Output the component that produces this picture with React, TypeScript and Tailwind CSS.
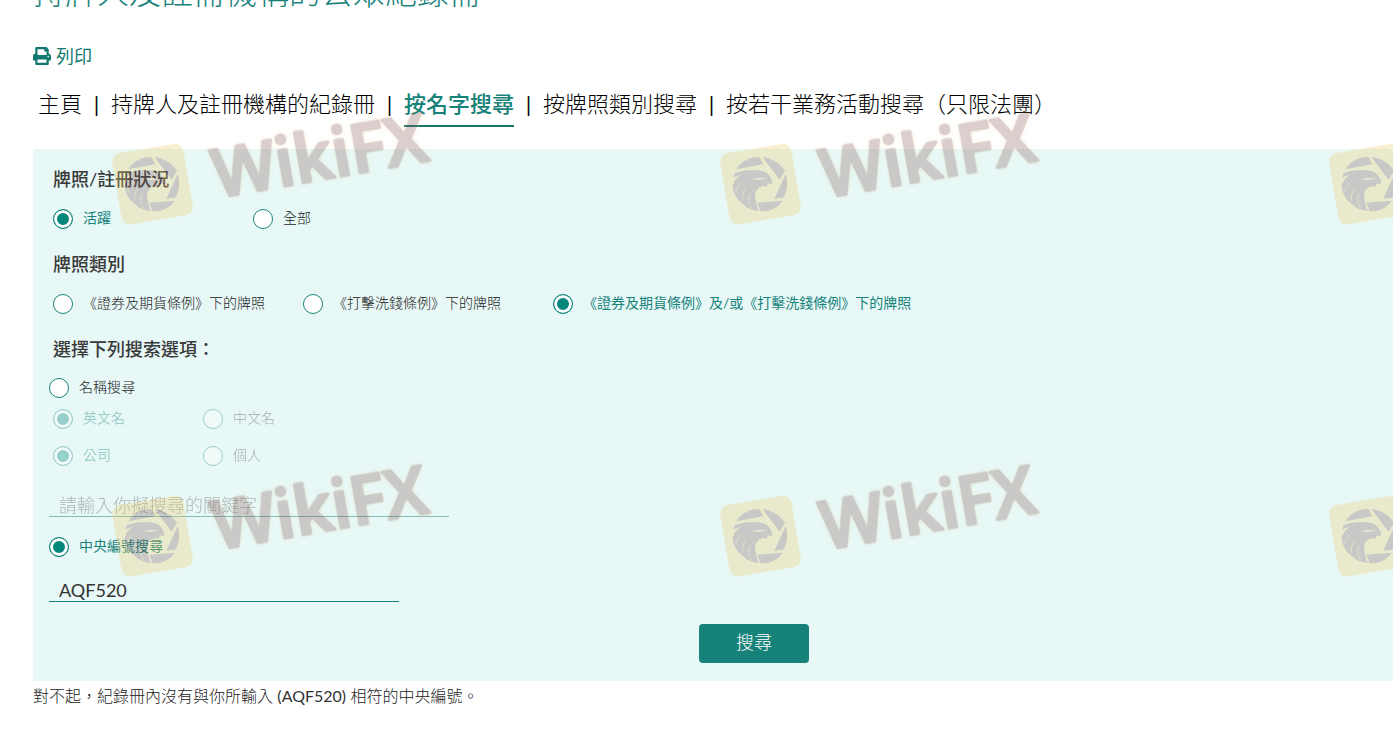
import { useState } from "react";
import type { ReactNode } from "react";
import { FaPrint } from "react-icons/fa";

const NAV = [
  { label: "主頁" },
  { label: "持牌人及註冊機構的紀錄冊" },
  { label: "按名字搜尋", active: true },
  { label: "按牌照類別搜尋" },
  { label: "按若干業務活動搜尋（只限法團）" },
];

// the last column only has room for the badge
const MARKS = [0, 352].flatMap((y) => [
  { x: 0, y, word: true },
  { x: 608, y, word: true },
  { x: 1217, y, word: false },
]);

type RadioProps = {
  name: string;
  value: string;
  label: string;
  checked: boolean;
  onChange: (value: string) => void;
  disabled?: boolean;
  className?: string;
};

function Radio({ name, value, label, checked, onChange, disabled, className = "" }: RadioProps) {
  return (
    <label className={`flex h-5 items-center gap-2.5 text-sm whitespace-nowrap ${className}`}>
      <input
        type="radio"
        name={name}
        value={value}
        checked={checked}
        disabled={disabled}
        onChange={() => onChange(value)}
        className="peer size-5 shrink-0 appearance-none rounded-full border border-[#17827a] bg-white checked:bg-[#05877b] checked:shadow-[inset_0_0_0_3px_white] disabled:opacity-35"
      />
      <span className="pb-0.5 leading-5 font-light text-[#222] peer-checked:font-normal peer-checked:text-[#17827a] peer-disabled:opacity-35">
        {label}
      </span>
    </label>
  );
}

function GroupTitle({ children }: { children: ReactNode }) {
  return <h2 className="pl-1 text-lg leading-7 font-medium text-[#3a3a3a]">{children}</h2>;
}

function Watermark() {
  return (
    <svg aria-hidden="true" className="pointer-events-none absolute inset-0 h-full w-full">
      {MARKS.map(({ x, y, word }) => (
        <g key={`${x}-${y}`} transform={`translate(${x} ${y})`} opacity="0.3">
          <g transform="translate(107 138) scale(0.3333)">
            <rect x="28" y="30" width="217" height="217" rx="26" fill="#edcd68" transform="rotate(-9.6 136.5 138.5)" />
            <g fill="#825f5c">
              <path d="M64 94C78 71 101 57 133 57L145 79Z" />
              <path d="M142 57C171 61 195 75 210 98L194 125Z" />
              <path d="M212 107C220 132 217 158 205 179L178 182Z" />
              <path d="M127 194L203 188C188 210 164 221 137 220Z" />
              <path d="M60 105C84 96 117 93 142 99C161 104 171 119 172 139C164 134 153 137 157 146C145 143 133 145 126 155C116 168 120 184 131 219C105 216 95 209 83 198C66 185 54 165 53 143C57 129 65 119 76 112C67 112 60 116 55 121C56 114 58 109 60 105Z" />
            </g>
            <path d="M112 120C124 127 139 129 157 118C144 122 130 121 112 120Z" fill="#edcd68" />
            <path d="M78 134C69 142 64 151 63 162M91 151C84 162 81 174 83 188M105 168C99 180 101 196 109 211" fill="none" stroke="#edcd68" strokeWidth="2" />
          </g>
          {word && (
            <text
              transform="translate(217 198) rotate(-10)"
              fontFamily="'Open Sans', 'Noto Sans', sans-serif"
              fontSize="67"
              fontWeight="600"
              fill="#8a5f5c"
              stroke="#8a5f5c"
              strokeWidth="3"
              strokeLinejoin="round"
              className="drop-shadow-[0_0_2px_#f3d890]"
            >
              WikiFX
            </text>
          )}
        </g>
      ))}
    </svg>
  );
}

export default function App() {
  const [status, setStatus] = useState("active");
  const [licence, setLicence] = useState("both");
  const [mode, setMode] = useState("ce");
  const [lang, setLang] = useState("en");
  const [entity, setEntity] = useState("company");
  const [keyword, setKeyword] = useState("");
  const [ceNumber, setCeNumber] = useState("AQF520");
  const byName = mode === "name";

  return (
    <div className="relative min-h-screen overflow-hidden bg-white pl-[33px] font-[Lato,'Noto_Sans_CJK_TC',sans-serif] text-[#222]">
      <h1 className="-mt-7 text-[32px] leading-10 font-light text-[#17827a]">
        持牌人及註冊機構的公眾紀錄冊
      </h1>

      <button type="button" className="mt-8 flex h-6 items-center gap-[5px] text-lg leading-6 text-[#117a70]">
        <FaPrint className="size-[18px]" />
        列印
      </button>

      <nav className="mt-[15px] flex h-11 items-start pl-[5px] text-[22px] leading-[42px] font-light whitespace-nowrap text-black">
        {NAV.map((item, i) => (
          <span key={item.label} className="flex">
            {i > 0 && <span className="w-[29px] text-center font-normal">|</span>}
            <a
              href="#"
              className={item.active ? "border-b-2 border-[#17776f] font-medium text-[#17827a]" : ""}
            >
              {item.label}
            </a>
          </span>
        ))}
      </nav>

      <form
        className="mt-[22px] bg-[#e7f8f7] px-4 pt-4 pb-[18px]"
        onSubmit={(e) => e.preventDefault()}
      >
        <GroupTitle>牌照/註冊狀況</GroupTitle>
        <div className="mt-4 flex pl-1">
          <Radio name="status" value="active" label="活躍" checked={status === "active"} onChange={setStatus} className="w-[200px]" />
          <Radio name="status" value="all" label="全部" checked={status === "all"} onChange={setStatus} />
        </div>

        <div className="mt-[21px]">
          <GroupTitle>牌照類別</GroupTitle>
        </div>
        <div className="mt-4 flex pl-1">
          <Radio name="licence" value="sfo" label="《證券及期貨條例》下的牌照" checked={licence === "sfo"} onChange={setLicence} className="w-[250px]" />
          <Radio name="licence" value="amlo" label="《打擊洗錢條例》下的牌照" checked={licence === "amlo"} onChange={setLicence} className="w-[250px]" />
          <Radio name="licence" value="both" label="《證券及期貨條例》及/或《打擊洗錢條例》下的牌照" checked={licence === "both"} onChange={setLicence} />
        </div>

        <div className="mt-[21px]">
          <GroupTitle>選擇下列搜索選項：</GroupTitle>
        </div>
        <Radio name="mode" value="name" label="名稱搜尋" checked={byName} onChange={setMode} className="mt-[15px]" />
        <div className="mt-[11px] flex pl-1">
          <Radio name="lang" value="en" label="英文名" checked={lang === "en"} onChange={setLang} disabled={!byName} className="w-[150px]" />
          <Radio name="lang" value="zh" label="中文名" checked={lang === "zh"} onChange={setLang} disabled={!byName} />
        </div>
        <div className="mt-[17px] flex pl-1">
          <Radio name="entity" value="company" label="公司" checked={entity === "company"} onChange={setEntity} disabled={!byName} className="w-[150px]" />
          <Radio name="entity" value="person" label="個人" checked={entity === "person"} onChange={setEntity} disabled={!byName} />
        </div>
        <input
          type="text"
          aria-label="名稱搜尋"
          placeholder="請輸入你擬搜尋的關鍵字"
          value={keyword}
          disabled={!byName}
          onChange={(e) => setKeyword(e.target.value)}
          className="mt-6 block h-[27px] w-[400px] border-b border-[#17827a] px-2.5 pt-1 text-lg leading-6 font-light placeholder:text-[#777] disabled:opacity-50"
        />

        <Radio name="mode" value="ce" label="中央編號搜尋" checked={mode === "ce"} onChange={setMode} className="mt-5" />
        <input
          type="text"
          aria-label="中央編號搜尋"
          value={ceNumber}
          disabled={byName}
          onChange={(e) => setCeNumber(e.target.value)}
          className="mt-[22px] block h-[23px] w-[350px] border-b border-[#17827a] px-2.5 text-lg leading-5 text-[#333]"
        />

        <div className="mt-[22px] flex justify-center pl-[82px]">
          <button
            type="submit"
            className="h-[39px] w-[110px] rounded bg-[#17827a] pb-1 text-lg leading-6 font-light text-white"
          >
            搜尋
          </button>
        </div>
      </form>

      <p className="mt-[3px] text-base leading-6 font-light text-[#222]">
        對不起，紀錄冊內沒有與你所輸入 <span className="font-normal text-[#333]">(AQF520)</span> 相符的中央編號。
      </p>

      <Watermark />
    </div>
  );
}
